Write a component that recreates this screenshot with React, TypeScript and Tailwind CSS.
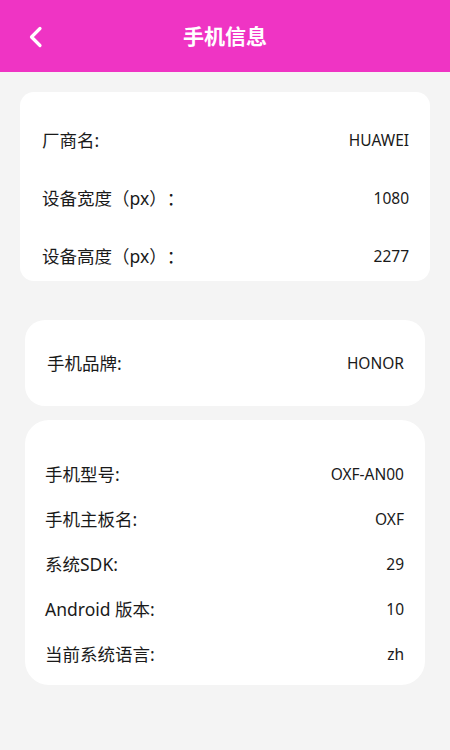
import React from "react";

const font = { fontFamily: '"Noto Sans", "Noto Sans CJK SC", sans-serif' };

function Row({ label, value }: { label: string; value: string }) {
  return (
    <div className="flex items-center justify-between h-[20px]">
      <span className="text-[17.5px] leading-[20px] text-[#1a1a1a] [text-spacing-trim:space-all]">{label}</span>
      <span className="text-[15.5px] leading-[20px] text-[#1a1a1a]">{value}</span>
    </div>
  );
}

export default function App() {
  return (
    <div className="w-[450px] h-[750px] bg-[#f4f4f4] flex flex-col" style={font}>
      <div className="h-[72px] bg-[#ef34c4] flex items-center relative shrink-0">
        <div className="absolute left-[27px] top-[26px]">
          <svg width="18" height="22" viewBox="0 0 18 22" fill="none">
            <path d="M13 2.5 L4.5 11 L13 19.5" stroke="#ffffff" strokeWidth="3.2" strokeLinecap="round" strokeLinejoin="round" />
          </svg>
        </div>
        <div className="flex-1 text-center text-white text-[21px] font-bold leading-[24px]">手机信息</div>
      </div>

      <div className="mt-[20px] mx-[20px] bg-white rounded-[14px] pt-[38px] pb-[15px] pl-[22px] pr-[21px] flex flex-col gap-[38px]">
        <Row label="厂商名:" value="HUAWEI" />
        <Row label="设备宽度（px）：" value="1080" />
        <Row label="设备高度（px）：" value="2277" />
      </div>

      <div className="mt-[39px] mx-[25px] bg-white rounded-[20px] pt-[33px] pb-[33px] pl-[22px] pr-[21px] flex flex-col">
        <Row label="手机品牌:" value="HONOR" />
      </div>

      <div className="mt-[14px] mx-[25px] bg-white rounded-[24px] pt-[44px] pb-[21px] pl-[20px] pr-[21px] flex flex-col gap-[25px]">
        <Row label="手机型号:" value="OXF-AN00" />
        <Row label="手机主板名:" value="OXF" />
        <Row label="系统SDK:" value="29" />
        <Row label="Android 版本:" value="10" />
        <Row label="当前系统语言:" value="zh" />
      </div>
    </div>
  );
}
